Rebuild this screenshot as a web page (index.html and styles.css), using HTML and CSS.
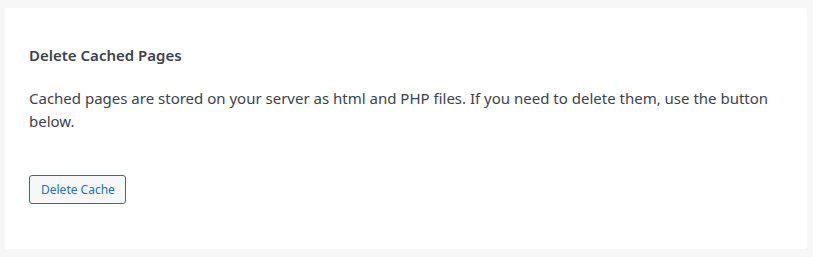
FILE: index.html
```html
<!DOCTYPE html>
<html>
<head>
    <meta charset="UTF-8">
    <title>Delete Cached Pages</title>
    <link rel="stylesheet" href="styles.css">
</head>
<body>
    <div class="card">
        <h3 class="card-title">Delete Cached Pages</h3>
        <p class="card-text">Cached pages are stored on your server as html and PHP files. If you need to delete them, use the button below.</p>
        <button class="btn">Delete Cache</button>
    </div>
</body>
</html>
```

FILE: styles.css
```css
body {
    margin: 0;
    padding: 8px 6px 8px 5px;
    background: #f7f7f7;
    font-family: 'Noto Sans', sans-serif;
    color: #3c434a;
}

.card {
    background: #fff;
    border-radius: 2px;
    padding: 37px 24px 0 24px;
    height: 204px;
}

.card-title {
    margin: 0 0 22px;
    font-size: 15px;
    line-height: 20px;
    font-weight: 600;
    color: #3c434a;
}

.card-text {
    margin: 0 0 42px;
    font-size: 15px;
    line-height: 23px;
}

.btn {
    font-family: inherit;
    font-size: 12px;
    color: #2271b1;
    background: #f6f7f7;
    border: 1px solid #2271b1;
    border-radius: 3px;
    padding: 0 10px 0 11px;
    height: 29px;
    cursor: pointer;
}
```
